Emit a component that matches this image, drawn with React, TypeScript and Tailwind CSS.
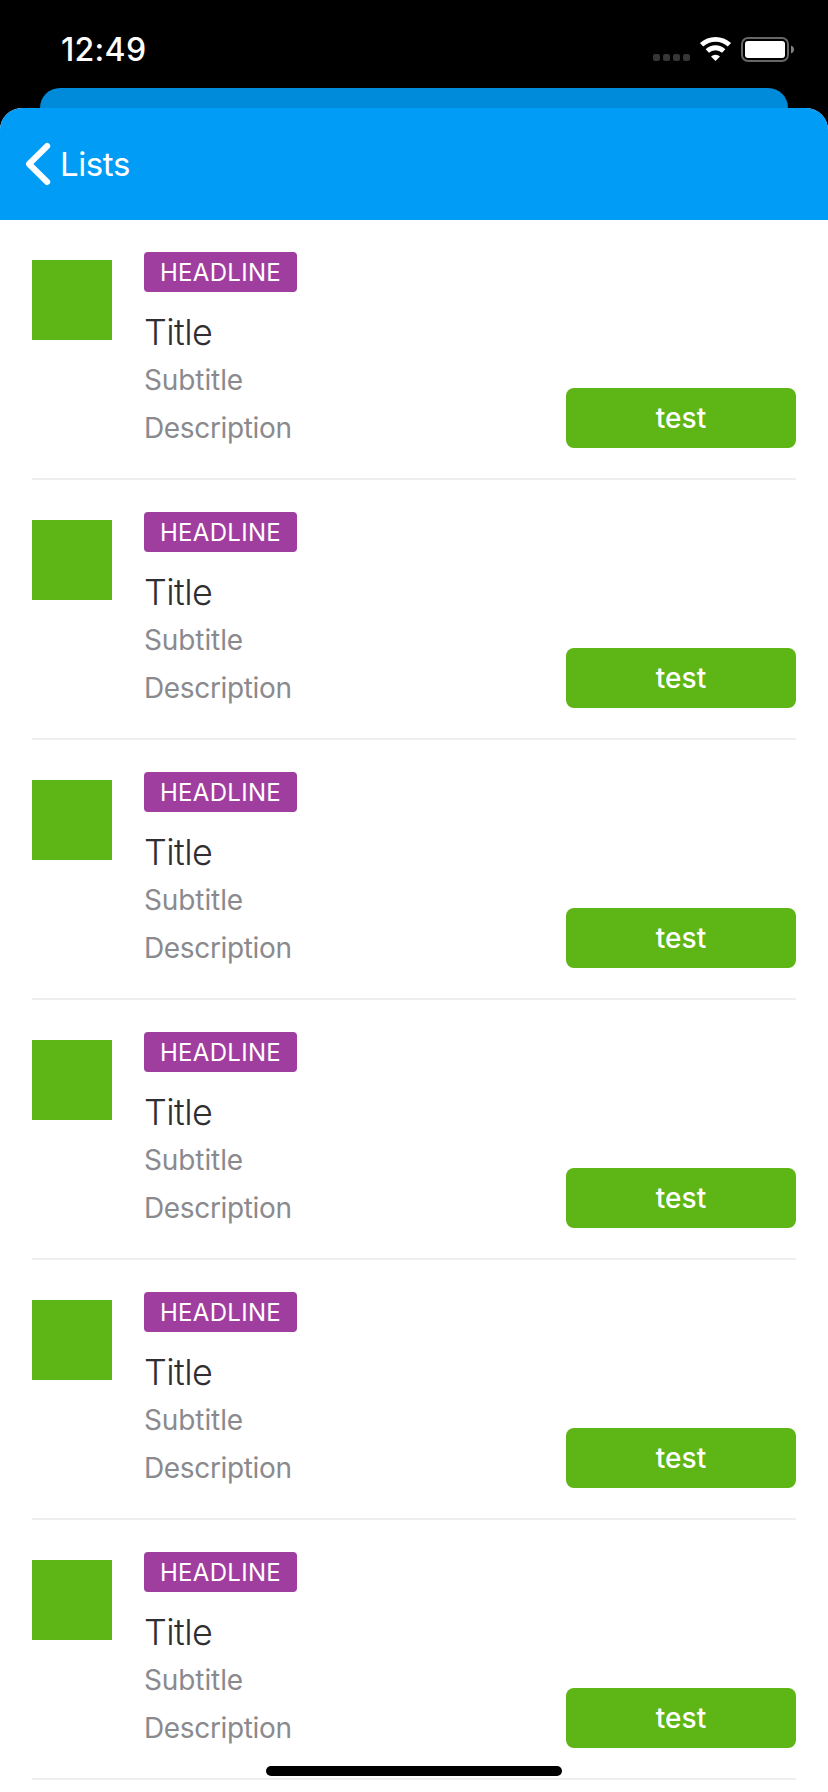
const ROWS = [1, 2, 3, 4, 5, 6];

function StatusIcons() {
  return (
    <svg width="144" height="28" viewBox="652 36 144 28" fill="none" aria-hidden="true">
      <g fill="#363636">
        <rect x="653" y="54" width="7" height="7" rx="2" />
        <rect x="663" y="54" width="7" height="7" rx="2" />
        <rect x="673" y="54" width="7" height="7" rx="2" />
        <rect x="683" y="54" width="7" height="7" rx="2" />
      </g>
      <path d="M701.600 44.800a20.500 20.500 0 0 1 27.800 0" stroke="#fff" strokeWidth="4.900" />
      <path d="M707.300 51a12 12 0 0 1 16.400 0" stroke="#fff" strokeWidth="4.900" />
      <path d="M711 56.400a6.600 6.600 0 0 1 9 0L715.500 61Z" fill="#fff" />
      <rect x="742" y="38" width="46" height="23" rx="6" stroke="#666" strokeWidth="2" />
      <rect x="745" y="41" width="40" height="17" rx="3" fill="#fff" />
      <path d="M791 45.500c2 .7 3 2.200 3 4s-1 3.300-3 4Z" fill="#808080" />
    </svg>
  );
}

function ListRow() {
  return (
    <li className="mx-8 flex h-[260px] border-b-2 border-[#eeeeee]">
      <div className="mt-10 size-20 shrink-0 bg-[#5db615]" />
      <div className="ml-8 flex flex-1 flex-col items-start pt-8">
        <span className="flex h-10 w-[153px] items-center justify-center rounded-[4px] bg-[#a03ea0] pt-0.5 text-[24px] leading-[38px] tracking-[0.3px] text-white">
          HEADLINE
        </span>
        <h2 className="mt-4 text-[36px] leading-[48px] font-light tracking-[-0.6px] text-[#2f2f31]">Title</h2>
        <p className="text-[28px] leading-[48px] tracking-[-0.1px] text-[#8a8a8e]">Subtitle</p>
        <p className="text-[28px] leading-[48px] tracking-[-0.35px] text-[#8a8a8e]">Description</p>
      </div>
      <button className="mb-[30px] h-[60px] w-[230px] self-end rounded-lg bg-[#5db615] text-[28px] font-medium tracking-[0.1px] text-white">
        test
      </button>
    </li>
  );
}

export default function App() {
  return (
    <div className="relative flex h-[1792px] w-[828px] flex-col overflow-hidden bg-black font-['Inter',sans-serif]">
      <div className="flex h-[88px] shrink-0 items-start justify-between pt-[29px] pr-8 pl-[61px]">
        <time className="pt-0.5 text-[32px] leading-[38px] font-medium tracking-[0.3px] text-white">12:49</time>
        <div className="pt-[7px]">
          <StatusIcons />
        </div>
      </div>
      <div className="mx-10 h-5 shrink-0 rounded-t-[20px] bg-[#008ada]" />
      <main className="flex-1 overflow-hidden rounded-t-[22px] bg-white">
        <header className="flex h-28 items-center bg-[#009cf6] pl-[26px] text-white">
          <svg width="26" height="44" viewBox="0 0 26 44" fill="none" stroke="currentColor" strokeWidth="6" strokeLinecap="round" strokeLinejoin="round">
            <path d="M21.200 4 3 22l18.200 18" />
          </svg>
          <span className="ml-2 pt-px text-[33px] tracking-[-0.4px]">Lists</span>
        </header>
        <ul>
          {ROWS.map((row) => (
            <ListRow key={row} />
          ))}
        </ul>
      </main>
      <div className="absolute bottom-4 left-[266px] h-[10px] w-[296px] rounded-full bg-black" />
    </div>
  );
}
